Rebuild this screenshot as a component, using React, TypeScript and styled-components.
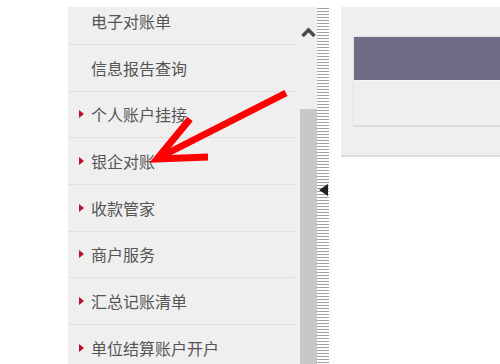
import styled, { createGlobalStyle } from 'styled-components';

const GlobalStyle = createGlobalStyle`
  html, body {
    margin: 0;
    padding: 0;
    background: #ffffff;
    overflow: hidden;
  }
  body {
    font-family: "Noto Sans CJK SC", "Noto Sans", sans-serif;
  }
`;

interface MenuEntry {
  label: string;
  marked: boolean;
}

const menu: MenuEntry[] = [
  { label: '电子对账单', marked: false },
  { label: '信息报告查询', marked: false },
  { label: '个人账户挂接', marked: true },
  { label: '银企对账', marked: true },
  { label: '收款管家', marked: true },
  { label: '商户服务', marked: true },
  { label: '汇总记账清单', marked: true },
  { label: '单位结算账户开户', marked: true },
];

const Page = styled.div`
  position: relative;
  width: 500px;
  height: 364px;
  display: flex;
  align-items: flex-start;
  padding: 7px 0 0 68px;
  box-sizing: border-box;
  overflow: hidden;
`;

const SidePanel = styled.div`
  display: flex;
  width: 249px;
  height: 357px;
  background: #efefef;
  overflow: hidden;
  flex-shrink: 0;
`;

const MenuList = styled.ul`
  list-style: none;
  margin: -8.67px 5px 0 0;
  padding: 0;
  width: 227px;
`;

const MenuRow = styled.li`
  box-sizing: border-box;
  height: 46.67px;
  display: flex;
  align-items: center;
  padding-left: 11px;
  border-bottom: 1.5px solid #e0e0e0;
  font-size: 16px;
  color: #555555;
`;

const Marker = styled.span<{ $show: boolean }>`
  width: 0;
  height: 0;
  border-top: 4px solid transparent;
  border-bottom: 4px solid transparent;
  border-left: 5px solid ${(p) => (p.$show ? '#b8102a' : 'transparent')};
  margin-right: 7px;
  flex-shrink: 0;
`;

const ScrollBar = styled.div`
  width: 17px;
  display: flex;
  flex-direction: column;
  flex-shrink: 0;
`;

const ScrollButton = styled.div`
  height: 48px;
  display: flex;
  justify-content: center;
  align-items: flex-start;
  padding-top: 20px;
  box-sizing: border-box;
`;

const ScrollGap = styled.div`
  height: 54px;
`;

const Thumb = styled.div`
  flex: 1;
  background: #c8c8c8;
`;

const Splitter = styled.div`
  position: relative;
  width: 12px;
  height: 357px;
  flex-shrink: 0;
  background-color: #ffffff;
  background-image: radial-gradient(circle, #a0a0a0 0.75px, transparent 0.85px);
  background-size: 2px 3px;
  display: flex;
  align-items: flex-start;
  padding-top: 177px;
  box-sizing: border-box;
`;

const Collapse = styled.span`
  width: 0;
  height: 0;
  margin-left: 2px;
  border-top: 6px solid transparent;
  border-bottom: 6px solid transparent;
  border-right: 9px solid #222222;
`;

const ContentPanel = styled.div`
  margin-left: 12px;
  flex: 1;
  height: 150px;
  background: #efefef;
  border-bottom: 2px solid #dddddd;
  box-sizing: border-box;
  padding: 29px 0 0 12px;
  overflow: hidden;
`;

const Table = styled.div`
  height: 91px;
  border: 1px solid #e2e2e2;
  border-bottom: 2px solid #dcdcdc;
  border-right: none;
  box-sizing: border-box;
  background: #efefef;
`;

const TableHead = styled.div`
  height: 43px;
  background: #6e6d85;
  border-bottom: 1px solid #f6f6f6;
`;

const Annotation = styled.svg`
  position: absolute;
  left: 0;
  top: 0;
  pointer-events: none;
`;

export default function App() {
  return (
    <>
      <GlobalStyle />
      <Page>
        <SidePanel>
          <MenuList>
            {menu.map((item) => (
              <MenuRow key={item.label}>
                <Marker $show={item.marked} />
                {item.label}
              </MenuRow>
            ))}
          </MenuList>
          <ScrollBar>
            <ScrollButton>
              <svg width="15" height="11" viewBox="0 0 15 11">
                <path d="M1.5 9 L7.5 3 L13.5 9" fill="none" stroke="#4a4a4a" strokeWidth="3.4" />
              </svg>
            </ScrollButton>
            <ScrollGap />
            <Thumb />
          </ScrollBar>
        </SidePanel>
        <Splitter>
          <Collapse />
        </Splitter>
        <ContentPanel>
          <Table>
            <TableHead />
          </Table>
        </ContentPanel>
        <Annotation width="500" height="364" viewBox="0 0 500 364">
          <line x1="286" y1="93" x2="162" y2="156" stroke="#ff0000" strokeWidth="7" strokeLinecap="butt" />
          <polyline
            points="190,119 157,159 208,157"
            fill="none"
            stroke="#ff0000"
            strokeWidth="7"
            strokeLinejoin="miter"
            strokeLinecap="butt"
          />
        </Annotation>
      </Page>
    </>
  );
}
